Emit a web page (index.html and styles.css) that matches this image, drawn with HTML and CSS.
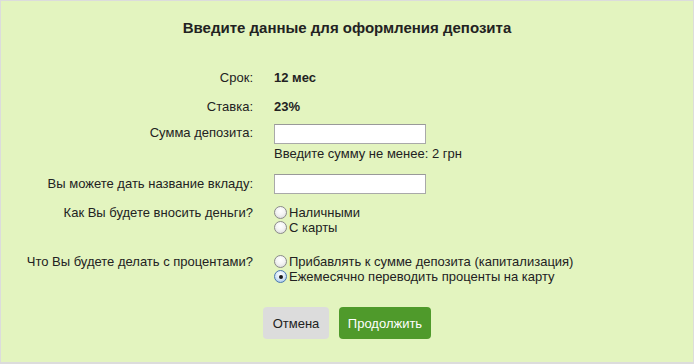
FILE: index.html
```html
<!DOCTYPE html>
<html lang="ru">
<head>
<meta charset="utf-8">
<title>Депозит</title>
<link rel="stylesheet" href="styles.css">
</head>
<body>
<div class="panel">
  <h1 class="title">Введите данные для оформления депозита</h1>
  <div class="form">
    <div class="row row-info">
      <div class="label">Срок:</div>
      <div class="value strong">12 мес</div>
    </div>
    <div class="row row-info">
      <div class="label">Ставка:</div>
      <div class="value strong">23%</div>
    </div>
    <div class="row row-sum">
      <div class="label label-input">Сумма депозита:</div>
      <div class="value">
        <input class="field" type="text">
        <div class="hint">Введите сумму не менее: 2 грн</div>
      </div>
    </div>
    <div class="row row-name">
      <div class="label label-input2">Вы можете дать название вкладу:</div>
      <div class="value"><input class="field" type="text"></div>
    </div>
    <div class="row row-radio">
      <div class="label">Как Вы будете вносить деньги?</div>
      <div class="value">
        <label class="opt"><span class="radio"></span>Наличными</label>
        <label class="opt"><span class="radio"></span>С карты</label>
      </div>
    </div>
    <div class="row row-radio2">
      <div class="label">Что Вы будете делать с процентами?</div>
      <div class="value">
        <label class="opt"><span class="radio"></span>Прибавлять к сумме депозита (капитализация)</label>
        <label class="opt"><span class="radio checked"></span>Ежемесячно переводить проценты на карту</label>
      </div>
    </div>
  </div>
  <div class="actions">
    <button class="btn btn-cancel" type="button">Отмена</button>
    <button class="btn btn-go" type="button">Продолжить</button>
  </div>
</div>
</body>
</html>
```
FILE: styles.css
```css
html, body {
  margin: 0;
  padding: 0;
  background: #ffffff;
}
body {
  font-family: "Liberation Sans", Arial, sans-serif;
  font-size: 13px;
  color: #222;
}
.panel {
  box-sizing: border-box;
  width: 694px;
  height: 364px;
  background: #e3f4bf;
  border: 1px solid #dcdcdc;
  border-bottom: 2px solid #dcdcdc;
  padding-top: 18px;
}
.title {
  margin: 0;
  font-size: 15px;
  line-height: 18px;
  font-weight: bold;
  text-align: center;
  color: #222;
}
.form {
  margin-top: 33px;
}
.row {
  display: grid;
  grid-template-columns: 252px 1fr;
  column-gap: 21px;
  align-items: start;
  line-height: 15px;
}
.label {
  text-align: right;
  color: #222;
}
.strong {
  font-weight: bold;
}
.row-info {
  margin-bottom: 14px;
}
.row-sum {
  margin-top: -4px;
}
.label-input {
  padding-top: 1px;
}
.label-input2 {
  padding-top: 2px;
}
.field {
  display: block;
  box-sizing: border-box;
  width: 152px;
  height: 20px;
  margin: 0;
  border: 1px solid #a9a9a9;
  border-top-color: #999;
  background: #fff;
  padding: 0 3px;
}
.hint {
  margin-top: 2px;
}
.row-name {
  margin-top: 13px;
}
.row-radio {
  margin-top: 11px;
}
.row-radio2 {
  margin-top: 19px;
}
.opt {
  display: flex;
  align-items: center;
  height: 15px;
}
.radio {
  box-sizing: border-box;
  width: 13px;
  height: 13px;
  margin-right: 2px;
  border-radius: 50%;
  border: 1px solid #8a8a8a;
  background: radial-gradient(circle at 50% 35%, #ffffff 0%, #f4f4f4 45%, #d6d6d6 100%);
  display: inline-flex;
  align-items: center;
  justify-content: center;
}
.radio.checked {
  border-color: #4a78b0;
  background: radial-gradient(circle at 50% 35%, #ffffff 0%, #d8e8f8 50%, #8fb7e4 100%);
}
.radio.checked::after {
  content: "";
  width: 4px;
  height: 4px;
  border-radius: 50%;
  background: #1a1a1a;
}
.actions {
  display: flex;
  justify-content: center;
  gap: 10px;
  margin-top: 23px;
}
.btn {
  height: 32px;
  border: none;
  border-radius: 4px;
  font-family: "Liberation Sans", Arial, sans-serif;
  font-size: 13px;
  padding: 0 8px;
  cursor: pointer;
}
.btn-cancel {
  width: 66px;
  background: #dcdcdc;
  color: #222;
}
.btn-go {
  width: 92px;
  background: #4f9a2b;
  color: #fff;
}
```
